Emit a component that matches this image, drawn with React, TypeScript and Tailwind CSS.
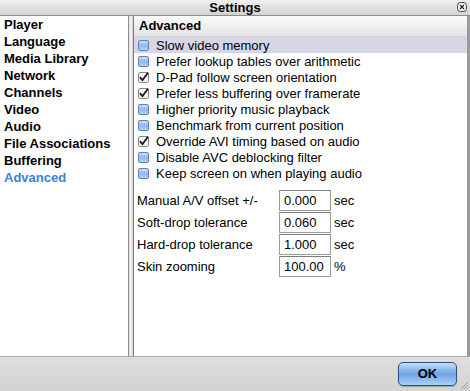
import React from "react";

const categories = [
  "Player",
  "Language",
  "Media Library",
  "Network",
  "Channels",
  "Video",
  "Audio",
  "File Associations",
  "Buffering",
  "Advanced",
];

const options: { label: string; checked: boolean }[] = [
  { label: "Slow video memory", checked: false },
  { label: "Prefer lookup tables over arithmetic", checked: false },
  { label: "D-Pad follow screen orientation", checked: true },
  { label: "Prefer less buffering over framerate", checked: true },
  { label: "Higher priority music playback", checked: false },
  { label: "Benchmark from current position", checked: false },
  { label: "Override AVI timing based on audio", checked: true },
  { label: "Disable AVC deblocking filter", checked: false },
  { label: "Keep screen on when playing audio", checked: false },
];

const fields = [
  { label: "Manual A/V offset +/-", value: "0.000", unit: "sec" },
  { label: "Soft-drop tolerance", value: "0.060", unit: "sec" },
  { label: "Hard-drop tolerance", value: "1.000", unit: "sec" },
  { label: "Skin zooming", value: "100.00", unit: "%" },
];

function Check({ checked }: { checked: boolean }) {
  if (checked) {
    return (
      <svg width="11" height="11" viewBox="0 0 11 11" className="shrink-0">
        <rect x="0.5" y="0.5" width="10" height="10" rx="1.5" fill="#f4f4f4" stroke="#8a8a8a" />
        <path d="M2.3 5.6 L4.4 8.2 L9.6 1.2" fill="none" stroke="#1a1a1a" strokeWidth="1.8" strokeLinecap="round" strokeLinejoin="round" />
      </svg>
    );
  }
  return (
    <svg width="11" height="11" viewBox="0 0 11 11" className="shrink-0">
      <defs>
        <linearGradient id="cbg" x1="0" y1="0" x2="0" y2="1">
          <stop offset="0" stopColor="#cfe2f8" />
          <stop offset="0.5" stopColor="#8fb8e8" />
          <stop offset="1" stopColor="#b9d6f6" />
        </linearGradient>
      </defs>
      <rect x="0.5" y="0.5" width="10" height="10" rx="1.5" fill="url(#cbg)" stroke="#5d84b8" />
    </svg>
  );
}

export default function App() {
  return (
    <div
      className="w-[470px] h-[391px] flex flex-col bg-[#d8d8d8] text-black overflow-hidden"
      style={{ fontFamily: '"Liberation Sans", Arial, sans-serif' }}
    >
      {/* Title bar */}
      <div className="relative h-[16px] shrink-0 flex items-center justify-center bg-gradient-to-b from-[#f0f0f0] to-[#d2d2d2] border-b border-[#8c8c8c]">
        <span className="text-[13px] font-bold leading-none">Settings</span>
        <div className="absolute right-[3px] top-[2px]">
          <svg width="10" height="10" viewBox="0 0 10 10">
            <rect x="0.5" y="0.5" width="9" height="9" rx="3" fill="#f2f2f2" stroke="#333" strokeWidth="0.9" />
            <path d="M3 3 L7 7 M7 3 L3 7" stroke="#222" strokeWidth="1.1" />
          </svg>
        </div>
      </div>

      {/* Main */}
      <div className="flex flex-1 min-h-0">
        {/* Left list */}
        <div className="w-[128px] bg-white pt-0 pl-[4px] flex flex-col">
          {categories.map((c) => (
            <div
              key={c}
              className={`h-[17px] flex items-center text-[13px] font-bold whitespace-nowrap ${
                c === "Advanced" ? "text-[#3c7fd8]" : "text-black"
              }`}
            >
              {c}
            </div>
          ))}
        </div>

        {/* Splitter */}
        <div className="w-[6px] flex bg-[#e6e6e6]">
          <div className="w-[1px] bg-[#8e8e8e]" />
          <div className="flex-1 bg-gradient-to-r from-[#dcdcdc] via-[#f6f6f6] to-[#cfcfcf]" />
          <div className="w-[1px] bg-[#7a7a7a]" />
        </div>

        {/* Right pane */}
        <div className="flex-1 bg-white border-r-[3px] border-[#9a9a9a] flex flex-col">
          <div className="h-[21px] shrink-0 flex items-center pl-[5px] bg-gradient-to-b from-[#fbfbfb] to-[#e3e3e3] border-b border-[#d0d0d0]">
            <span className="text-[13px] font-bold">Advanced</span>
          </div>
          <div className="flex flex-col">
            {options.map((o, i) => (
              <div
                key={o.label}
                className={`h-[16px] flex items-center gap-[7px] pl-[4px] text-[13px] whitespace-nowrap ${
                  i === 0 ? "bg-[#d7d6e6]" : ""
                }`}
              >
                <Check checked={o.checked} />
                <span className="leading-none">{o.label}</span>
              </div>
            ))}
          </div>

          <div className="mt-[9px] pl-[3px] grid grid-cols-[142px_52px_auto] gap-y-[0px] items-center">
            {fields.map((f) => (
              <React.Fragment key={f.label}>
                <div className="h-[22px] flex items-center text-[13px] whitespace-nowrap">{f.label}</div>
                <div className="h-[21px] mb-[1px] border border-[#9c9c9c] border-t-[#7c7c7c] bg-white flex items-center pl-[4px] text-[13px]">
                  {f.value}
                </div>
                <div className="h-[22px] flex items-center pl-[3px] text-[13px]">{f.unit}</div>
              </React.Fragment>
            ))}
          </div>
        </div>
      </div>

      {/* Bottom bar */}
      <div className="relative h-[35px] shrink-0 border-t border-[#a8a8a8] bg-gradient-to-b from-[#dedede] to-[#d3d3d3] flex items-start justify-end pr-[13px] pt-[5px]">
        <button className="w-[59px] h-[24px] rounded-[5px] border border-[#2a4f85] bg-gradient-to-b from-[#c6dcf5] via-[#6ea4e4] to-[#a9d0f7] shadow-[0_1px_1px_rgba(0,0,0,0.25)] text-[13px] font-bold text-black flex items-center justify-center">
          OK
        </button>
        <div className="absolute right-[1px] bottom-[1px]">
          <svg width="10" height="10" viewBox="0 0 10 10">
            <path d="M9 2 L2 9 M9 5 L5 9 M9 8 L8 9" stroke="#9a9a9a" strokeWidth="1" />
          </svg>
        </div>
      </div>
    </div>
  );
}
